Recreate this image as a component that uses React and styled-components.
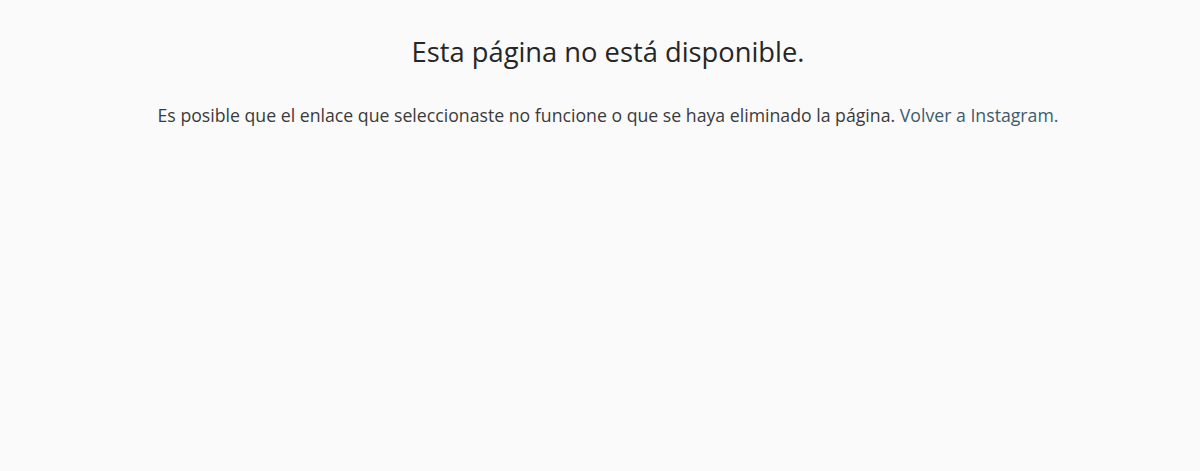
import React from 'react';
import styled, { createGlobalStyle } from 'styled-components';

const GlobalStyle = createGlobalStyle`
  html, body {
    margin: 0;
    padding: 0;
    background: #fafafa;
  }
  body {
    font-family: "Open Sans", "Noto Sans", "Liberation Sans", sans-serif;
    color: #262626;
  }
`;

const Page = styled.main`
  min-height: 471px;
  display: flex;
  flex-direction: column;
  align-items: center;
  padding: 34px 0 0 16px;
  box-sizing: border-box;
`;

const Title = styled.h2`
  margin: 0;
  font-size: 27.3px;
  font-weight: 500;
  line-height: 36px;
  color: #262626;
  text-align: center;
`;

const Message = styled.p`
  margin: 33px 0 0;
  font-size: 17.7px;
  line-height: 24px;
  color: #3a3a3a;
  text-align: center;
`;

const Link = styled.a`
  color: #3d5a6e;
  text-decoration: none;
`;

export default function App() {
  return (
    <>
      <GlobalStyle />
      <Page>
        <Title>Esta página no está disponible.</Title>
        <Message>
          Es posible que el enlace que seleccionaste no funcione o que se haya eliminado la página.{' '}
          <Link href="#">Volver a Instagram.</Link>
        </Message>
      </Page>
    </>
  );
}
